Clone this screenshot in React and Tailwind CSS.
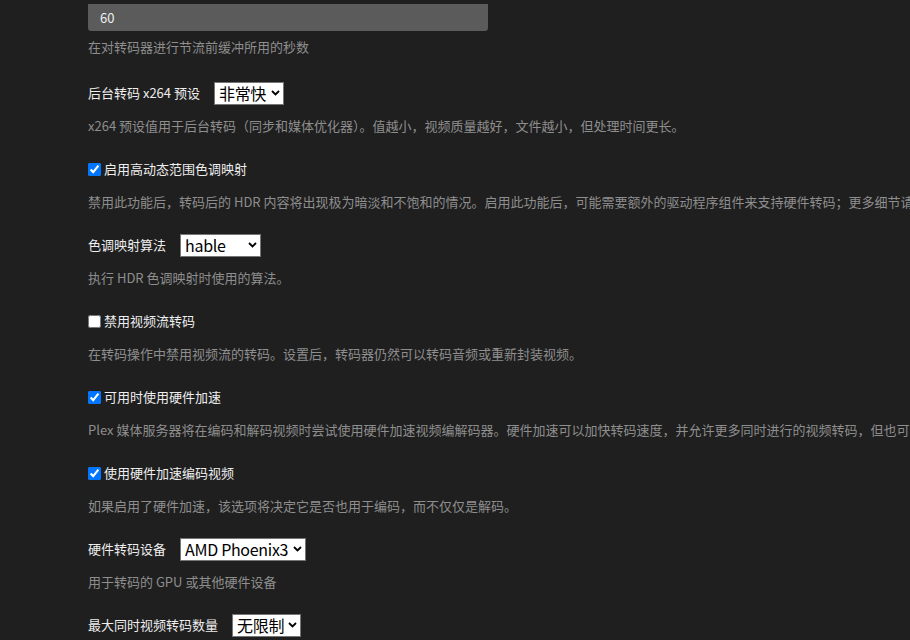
import React from "react";

const FONT = {
  fontFamily: '"Segoe UI", "Noto Sans CJK SC", "Noto Sans", sans-serif',
};

function Chevron() {
  return (
    <svg
      width="9"
      height="6"
      viewBox="0 0 9 6"
      className="pointer-events-none absolute right-[4px] top-1/2 -translate-y-1/2"
    >
      <path d="M1 1 L4.5 4.5 L8 1" fill="none" stroke="#000" strokeWidth="1.8" />
    </svg>
  );
}

function Select({ value, width }) {
  return (
    <div className="relative" style={{ width }}>
      <select
        defaultValue={value}
        className="h-[23px] w-full appearance-none border border-[#767676] bg-white pl-[4px] pr-[12px] text-[16px] leading-[21px] tracking-[-0.3px] text-black"
        style={FONT}
      >
        <option>{value}</option>
      </select>
      <Chevron />
    </div>
  );
}

function Help({ children, className = "" }) {
  return (
    <div
      className={
        "whitespace-nowrap text-[13px] leading-[20px] text-[#8e8e8e] " + className
      }
    >
      {children}
    </div>
  );
}

function SelectRow({ label, value, width, help }) {
  return (
    <div className="flex flex-col">
      <div className="flex h-[24px] items-center gap-[14px]">
        <span className="whitespace-nowrap text-[13px] text-[#eeeeee]">{label}</span>
        <Select value={value} width={width} />
      </div>
      <Help className="mt-[11px]">{help}</Help>
    </div>
  );
}

function CheckRow({ label, checked, help }) {
  return (
    <div className="flex flex-col">
      <label className="flex h-[24px] items-center">
        <input
          type="checkbox"
          defaultChecked={checked}
          className="m-0 h-[13px] w-[13px] accent-[#0075ff]"
        />
        <span className="ml-[3px] whitespace-nowrap text-[13px] text-[#eeeeee]">
          {label}
        </span>
      </label>
      <Help className="mt-[11px]">{help}</Help>
    </div>
  );
}

export default function App() {
  return (
    <div
      className="h-[640px] w-full overflow-hidden bg-[#1f1f1f] pl-[88px] pt-[4px]"
      style={FONT}
    >
      <div className="flex flex-col gap-[21px]">
        <div className="mb-[3px] flex flex-col">
          <div className="flex h-[27px] w-[400px] items-center rounded-b-[3px] bg-[#5b5b5b] pl-[12px] text-[13px] text-[#eeeeee]">
            60
          </div>
          <Help className="mt-[6px]">在对转码器进行节流前缓冲所用的秒数</Help>
        </div>

        <SelectRow
          label="后台转码 x264 预设"
          value="非常快"
          width={70}
          help="x264 预设值用于后台转码（同步和媒体优化器）。值越小，视频质量越好，文件越小，但处理时间更长。"
        />

        <CheckRow
          label="启用高动态范围色调映射"
          checked
          help="禁用此功能后，转码后的 HDR 内容将出现极为暗淡和不饱和的情况。启用此功能后，可能需要额外的驱动程序组件来支持硬件转码；更多细节请参阅此处。"
        />

        <SelectRow
          label="色调映射算法"
          value="hable"
          width={81}
          help="执行 HDR 色调映射时使用的算法。"
        />

        <CheckRow
          label="禁用视频流转码"
          checked={false}
          help="在转码操作中禁用视频流的转码。设置后，转码器仍然可以转码音频或重新封装视频。"
        />

        <CheckRow
          label="可用时使用硬件加速"
          checked
          help="Plex 媒体服务器将在编码和解码视频时尝试使用硬件加速视频编解码器。硬件加速可以加快转码速度，并允许更多同时进行的视频转码，但也可能降低视频质量。"
        />

        <CheckRow
          label="使用硬件加速编码视频"
          checked
          help="如果启用了硬件加速，该选项将决定它是否也用于编码，而不仅仅是解码。"
        />

        <SelectRow
          label="硬件转码设备"
          value="AMD Phoenix3"
          width={126}
          help="用于转码的 GPU 或其他硬件设备"
        />

        <SelectRow
          label="最大同时视频转码数量"
          value="无限制"
          width={69}
          help=""
        />
      </div>
    </div>
  );
}
